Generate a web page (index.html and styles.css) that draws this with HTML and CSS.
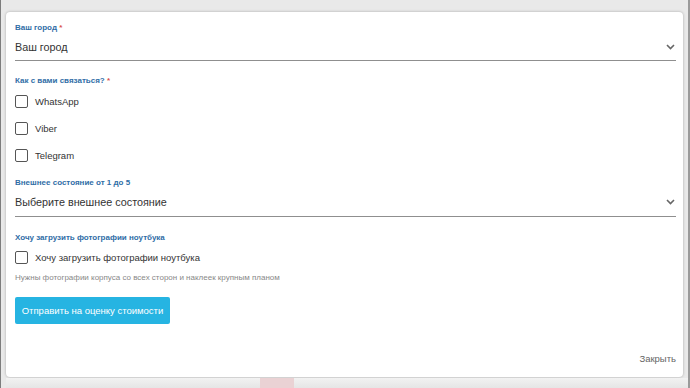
FILE: index.html
```html
<!DOCTYPE html>
<html>
<head>
  <title>Оценка ноутбука</title>
  <link rel="stylesheet" href="styles.css">
</head>
<body>
  <div class="page">
    <div class="modal">
      <div class="field">
        <label class="field-label">Ваш город <span class="req">*</span></label>
        <div class="select">
          <span>Ваш город</span>
          <svg class="chevron" width="9" height="6" viewBox="0 0 9 6"><polyline points="1,1 4.5,4.5 8,1" fill="none" stroke="#666" stroke-width="1.6"/></svg>
        </div>
      </div>

      <div class="field field-checks">
        <label class="field-label">Как с вами связаться? <span class="req">*</span></label>
        <div class="check-list">
          <div class="check-row"><span class="box"></span>WhatsApp</div>
          <div class="check-row"><span class="box"></span>Viber</div>
          <div class="check-row"><span class="box"></span>Telegram</div>
        </div>
      </div>

      <div class="field field-state">
        <label class="field-label">Внешнее состояние от 1 до 5</label>
        <div class="select select-tall">
          <span>Выберите внешнее состояние</span>
          <svg class="chevron" width="9" height="6" viewBox="0 0 9 6"><polyline points="1,1 4.5,4.5 8,1" fill="none" stroke="#666" stroke-width="1.6"/></svg>
        </div>
      </div>

      <div class="field field-photos">
        <label class="field-label">Хочу загрузить фотографии ноутбука</label>
        <div class="check-row"><span class="box"></span>Хочу загрузить фотографии ноутбука</div>
        <p class="hint">Нужны фотографии корпуса со всех сторон и наклеек крупным планом</p>
      </div>

      <button class="submit">Отправить на оценку стоимости</button>

      <div class="modal-footer">
        <a class="close-link">Закрыть</a>
      </div>
    </div>
    <div class="backdrop-strip"><span class="blur-pic"></span></div>
  </div>
</body>
</html>
```

FILE: styles.css
```css
/* page behind the modal */
body {
  margin: 0;
  font-family: "Liberation Sans", Arial, sans-serif;
  background-color: #e9e9e9;
}
.page {
  height: 388px;
  box-sizing: border-box;
  padding: 12px 0 0 5px;
  border-left: 1px solid #7d7d7d;
  border-right: 2px solid #9a9a9a;
  overflow: hidden;
}

/* modal card */
.modal {
  width: 677px;
  height: 365px;
  box-sizing: border-box;
  padding: 10px 7px 12px 9px;
  background-color: #fff;
  border-radius: 4px;
  box-shadow: 0 0 3px rgba(0, 0, 0, 0.28);
  display: flex;
  flex-direction: column;
}
.field {
  margin-bottom: 14px;
}
.field-checks {
  margin-bottom: 8px;
}
.field-state {
  margin-bottom: 15px;
}
.field-photos {
  margin-bottom: 12px;
}
.field-label {
  display: block;
  font-size: 8px;
  font-weight: bold;
  line-height: 12px;
  color: #2f6da6;
}
.req {
  color: #d9534f;
}

/* select look-alike */
.select {
  margin-top: 1px;
  display: flex;
  align-items: center;
  justify-content: space-between;
  height: 24px;
  padding-bottom: 1px;
  border-bottom: 1px solid #8f8f8f;
  font-size: 10.8px;
  color: #333;
}
.select-tall {
  padding-bottom: 2px;
}
.chevron {
  margin-right: 1px;
}

/* checkboxes */
.check-list {
  margin-top: 1px;
}
.check-row {
  display: flex;
  align-items: center;
  gap: 7px;
  height: 27px;
  font-size: 9.5px;
  color: #333;
}
.box {
  width: 11px;
  height: 11px;
  border: 1px solid #555;
  border-radius: 2px;
}
.hint {
  margin: 1px 0 0;
  font-size: 8px;
  line-height: 12px;
  color: #888;
}

/* submit */
.submit {
  align-self: flex-start;
  width: 155px;
  height: 27px;
  margin-top: 1px;
  padding: 0;
  border: none;
  border-radius: 2px;
  background-color: #26b4e2;
  color: #fff;
  font-family: inherit;
  font-size: 9.5px;
  cursor: pointer;
}
.modal-footer {
  margin-top: auto;
  text-align: right;
  line-height: 12px;
}
.close-link {
  font-size: 9.5px;
  color: #666;
}

/* blurred picture below the modal */
.backdrop-strip {
  height: 11px;
  margin-top: 1px;
  background: linear-gradient(#f2f2f2, #e4e4e4);
}
.blur-pic {
  display: block;
  width: 34px;
  height: 11px;
  margin-left: 254px;
  background-color: #ead2d4;
}
```
